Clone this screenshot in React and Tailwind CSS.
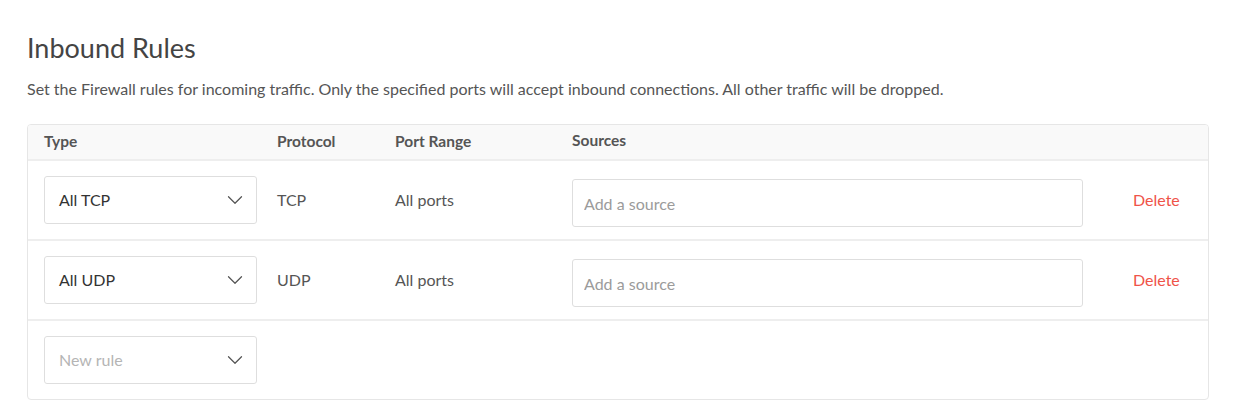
import { ChevronDown } from 'lucide-react';

const rows = [
  { type: 'All TCP', protocol: 'TCP', ports: 'All ports' },
  { type: 'All UDP', protocol: 'UDP', ports: 'All ports' },
];

function Select({ value, placeholder }) {
  return (
    <div className="flex h-12 w-[213px] items-center justify-between rounded-[3px] border border-[#dedede] bg-white pl-[14px] pr-[8px]">
      <span className={value ? 'text-[#333]' : 'text-[#b5b5b5]'}>{value || placeholder}</span>
      <ChevronDown size={26} strokeWidth={1.15} className="text-[#555]" />
    </div>
  );
}

export default function App() {
  return (
    <div className="bg-white px-[27px] pt-[31px] pb-[18px] text-[16px] text-[#555]" style={{ fontFamily: 'Lato, "Open Sans", sans-serif' }}>
      <h1 className="text-[27px] leading-[34px] text-[#444]">Inbound Rules</h1>
      <p className="mt-[14px] leading-[20px] text-[#555]">
        Set the Firewall rules for incoming traffic. Only the specified ports will accept inbound connections. All other traffic will be dropped.
      </p>

      <div className="mt-[25px] overflow-hidden rounded-[4px] border border-[#e6e6e6]">
        <div className="grid h-[36px] grid-cols-[233px_118px_177px_561px_1fr] items-center border-b-2 border-[#eeeeee] bg-[#f9f9f9] pl-[16px] text-[15.5px] font-bold text-[#555]">
          <div>Type</div>
          <div>Protocol</div>
          <div>Port Range</div>
          <div className="-mt-[3px]">Sources</div>
          <div />
        </div>

        {rows.map((r) => (
          <div key={r.type} className="grid h-20 grid-cols-[233px_118px_177px_561px_1fr] items-center border-b-2 border-[#eeeeee] pl-[16px]">
            <Select value={r.type} />
            <div>{r.protocol}</div>
            <div>{r.ports}</div>
            <div className="pt-[6px]">
              <input
                placeholder="Add a source"
                className="h-12 w-[511px] rounded-[3px] border border-[#dedede] px-[11px] text-[16px] text-[#333] placeholder:text-[#9b9b9b] outline-none"
              />
            </div>
            <div className="text-[#ef5349]">Delete</div>
          </div>
        ))}

        <div className="flex h-[78px] items-center pl-[16px]">
          <Select placeholder="New rule" />
        </div>
      </div>
    </div>
  );
}
